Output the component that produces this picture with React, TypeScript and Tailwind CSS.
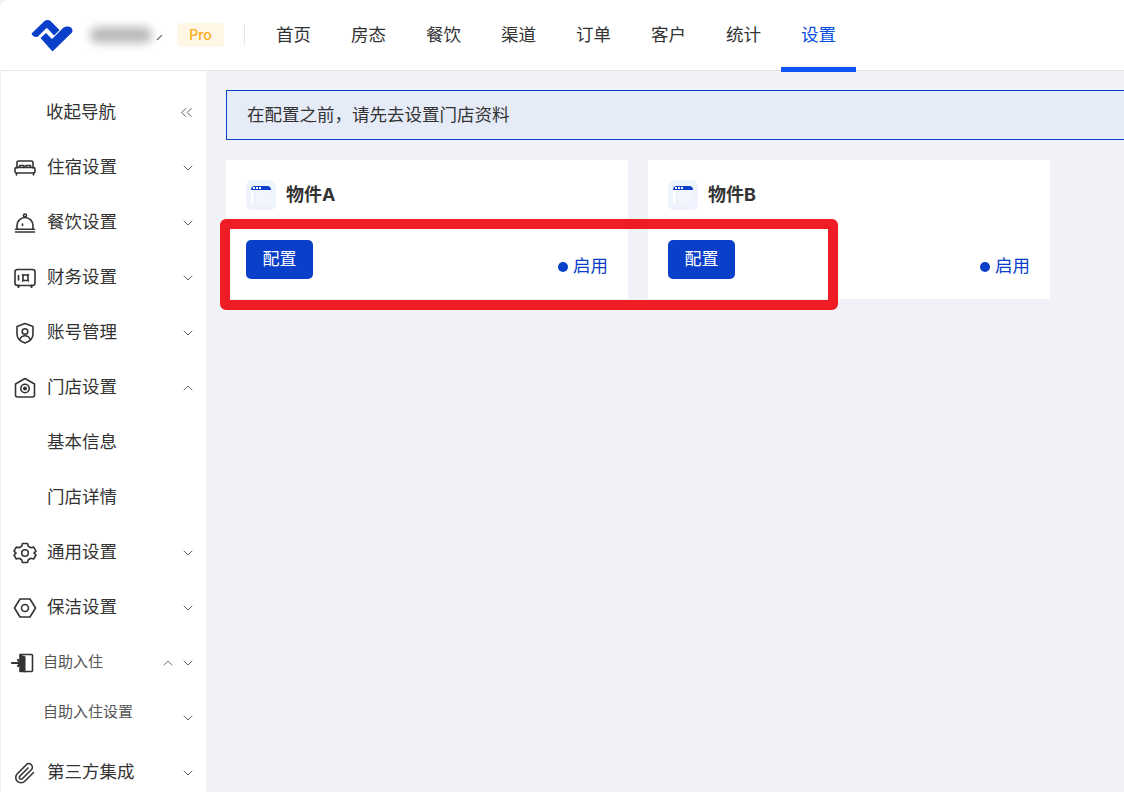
import { ReactNode } from 'react';
import { ChevronDown, ChevronUp, ChevronsLeft } from 'lucide-react';

const tabs = ['首页', '房态', '餐饮', '渠道', '订单', '客户', '统计', '设置'];

const Svg = ({ children }: { children: ReactNode }) => (
	<svg
		viewBox="0 0 24 24"
		className="w-6 h-6 text-[#333]"
		fill="none"
		stroke="currentColor"
		strokeWidth="1.6"
		strokeLinecap="round"
		strokeLinejoin="round"
	>
		{children}
	</svg>
);

const BedIcon = () => (
	<Svg>
		<path d="M4 12V6.5A1.5 1.5 0 0 1 5.5 5h13A1.5 1.5 0 0 1 20 6.5V12" />
		<path d="M6.5 11V9.5h4.5V11M13 11V9.5h4.5V11" />
		<rect x="2" y="11.5" width="20" height="5.5" rx="1.5" />
		<path d="M3.5 17v2M20.5 17v2" />
	</Svg>
);

const BellIcon = () => (
	<Svg>
		<circle cx="12" cy="4.5" r="1.5" />
		<path d="M4 18v-3.5a8 8 0 0 1 16 0V18" />
		<path d="M2.5 18.3h19M2.5 21h19" />
		<path d="M9.5 13v1.5" />
	</Svg>
);

const SafeIcon = () => (
	<Svg>
		<rect x="2" y="3.5" width="20" height="16" rx="2.5" />
		<path d="M5.5 9.5v4.5" />
		<path d="M10 9h5v5.5h-5zM9.5 8.5l1 1M15.500 8.500l-1 1M9.500 15l1-1M15.500 15l-1-1" />
		<path d="M5.500 19.500v1.500M18.500 19.500v1.500" strokeWidth="2.200" />
	</Svg>
);

const ShieldIcon = () => (
	<Svg>
		<path d="M12 2.500l8 3v7.500c0 4.500-3.500 7.500-8 9-4.500-1.500-8-4.500-8-9V5.500z" />
		<circle cx="12" cy="10.500" r="2.800" />
		<path d="M7 18c1-2.500 3-3.300 5-3.300s4 .8 5 3.300" />
	</Svg>
);

const HomeIcon = () => (
	<Svg>
		<path d="M12 2.500l9.500 5.500v11a2 2 0 0 1-2 2h-15a2 2 0 0 1-2-2V8z" />
		<circle cx="12" cy="12.500" r="4.200" />
		<circle cx="12" cy="12.500" r="1.200" fill="currentColor" />
	</Svg>
);

const GearIcon = () => (
	<Svg>
		<path d="M9.500 2.500h5l.8 2.800 2.600 1.500 2.800-.7 2.300 4-2 2 0 .0 2 1.900-2.300 4-2.800-.7-2.600 1.500-.8 2.700h-5l-.8-2.700-2.600-1.500-2.800.7-2.300-4 2-1.900-2-2 2.300-4 2.800.7 2.600-1.500z" />
		<circle cx="12" cy="12" r="3.300" />
	</Svg>
);

const HexIcon = () => (
	<Svg>
		<path d="M7 3h10l5.500 9-5.500 9H7l-5.500-9z" />
		<circle cx="12" cy="12" r="3.500" />
	</Svg>
);

const DoorIcon = () => (
	<Svg>
		<path d="M9 3.500h11.500a1 1 0 0 1 1 1v15a1 1 0 0 1-1 1H9z" />
		<path d="M9 3.500l5.500 2v16l-5.500-1.500z" fill="currentColor" stroke="none" />
		<path d="M1 12h9M7 9l3 3-3 3" strokeWidth="2.200" />
	</Svg>
);

const ClipIcon = () => (
	<Svg>
		<path d="M20.500 11.500l-8.700 8.700a5.300 5.300 0 0 1-7.500-7.500l9-9a3.500 3.500 0 0 1 5 5l-9 9a1.700 1.700 0 0 1-2.500-2.500l8.200-8.200" />
	</Svg>
);

const Logo = () => (
	<svg viewBox="0 0 44 34" className="w-[44px] h-[34px]">
		<path
			d="M1.500 15.500 14 3.500a5 5 0 0 1 7 0l8.500 8.500L24 17.500l-6-6.500-1.500-1L8 18.500a4.500 4.500 0 0 1-6.500-3z"
			fill="#0a3fc9"
		/>
		<path
			d="M10.500 20 16 15l6 6 11-11c1.500-1.500 3-1.500 5-1.500 3.500 0 5.500 3.500 4 6L22.500 33.500z"
			fill="#0a3fc9"
		/>
	</svg>
);

const WindowIcon = () => (
	<div className="w-[30px] h-[30px] rounded-md bg-[#eff3fd] flex items-center justify-center">
		<div className="w-5 h-[18px] rounded-sm bg-white overflow-hidden flex flex-col">
			<div className="h-1 bg-[#0a3fc9] flex items-center gap-px pl-0.5">
				<span className="w-0.5 h-0.5 bg-white" />
				<span className="w-0.5 h-0.5 bg-white" />
				<span className="w-0.5 h-0.5 bg-white" />
			</div>
			<div className="flex-1 flex">
				<div className="w-1 border-r border-[#e4e9f8]" />
				<div className="flex-1 bg-[#f3f5fc]" />
			</div>
		</div>
	</div>
);

interface RowProps {
	icon?: ReactNode;
	label: string;
	open?: boolean;
}

function MenuRow({ icon, label, open }: RowProps) {
	return (
		<div className="h-[55px] flex items-center relative">
			<div className="w-[46px] pl-3 shrink-0">{icon}</div>
			<span className="text-[17.5px] text-[#333]">{label}</span>
			{open === undefined ? null : open ? (
				<ChevronUp className="absolute left-[179px] w-4 h-4 text-[#666]" strokeWidth={1.5} />
			) : (
				<ChevronDown className="absolute left-[179px] w-4 h-4 text-[#666]" strokeWidth={1.5} />
			)}
		</div>
	);
}

function PropertyCard({ name }: { name: string }) {
	return (
		<div className="w-[402px] h-[139px] bg-white px-5 pt-5">
			<div className="flex items-center gap-2.5 h-[30px]">
				<WindowIcon />
				<span className="text-lg font-bold text-[#333]">{name}</span>
			</div>
			<div className="flex justify-between mt-[30px]">
				<button className="w-[67px] h-[39px] rounded-[5px] bg-[#0a3fc9] text-white text-[17px]">
					配置
				</button>
				<div className="flex items-center gap-[5px] h-[17px] mt-[18px] text-[#0a3fc9] text-[17.5px]">
					<span className="w-2.5 h-2.5 rounded-full bg-[#0a3fc9]" />
					启用
				</div>
			</div>
		</div>
	);
}

export default function App() {
	return (
		<div className="w-[1124px] h-[792px] overflow-hidden relative flex flex-col bg-[#f0f2f7] font-['Inter','Noto_Sans_CJK_SC',sans-serif]">
			<header className="h-[71px] shrink-0 bg-white border-b border-[#e6e6e8] flex items-center pl-[30px] rounded-tl-lg">
				<Logo />
				<div className="w-[62px] h-4 ml-[16px] rounded-full bg-[#b9b9b9] blur-[5px]" />
				<span className="ml-[4px] mt-1 w-[7px] border-t border-[#555] -rotate-45" />
				<span className="ml-[14px] w-[47px] h-6 rounded-sm bg-[#fff6e6] text-[#fbac14] text-sm font-medium flex items-center justify-center">
					Pro
				</span>
				<span className="ml-5 w-px h-[22px] bg-[#e8e8e8]" />
				<nav className="flex ml-[11px] h-full">
					{tabs.map((t) => (
						<div
							key={t}
							className={`relative w-[75px] flex items-center justify-center text-[17.5px] ${
								t === '设置' ? 'text-[#0a4fe0]' : 'text-[#333]'
							}`}
						>
							{t}
							{t === '设置' && (
								<span className="absolute left-0 right-0 bottom-[-2px] h-[5px] bg-[#0d55f5]" />
							)}
						</div>
					))}
				</nav>
			</header>
			<div className="flex flex-1 min-h-0">
				<aside className="w-[205px] shrink-0 ml-px bg-white pt-[14px] overflow-hidden">
					<div className="h-[55px] flex items-center relative">
						<span className="pl-[45px] text-[17.5px] text-[#333]">收起导航</span>
						<ChevronsLeft className="absolute left-[176px] w-[19px] h-[19px] text-[#555]" strokeWidth={1.2} />
					</div>
					<MenuRow icon={<BedIcon />} label="住宿设置" open={false} />
					<MenuRow icon={<BellIcon />} label="餐饮设置" open={false} />
					<MenuRow icon={<SafeIcon />} label="财务设置" open={false} />
					<MenuRow icon={<ShieldIcon />} label="账号管理" open={false} />
					<MenuRow icon={<HomeIcon />} label="门店设置" open={true} />
					<MenuRow label="基本信息" />
					<MenuRow label="门店详情" />
					<MenuRow icon={<GearIcon />} label="通用设置" open={false} />
					<MenuRow icon={<HexIcon />} label="保洁设置" open={false} />
					<div className="h-[55px] flex items-center relative">
						<div className="w-[42px] pl-[10px] shrink-0">
							<DoorIcon />
						</div>
						<span className="text-[15px] text-[#555]">自助入住</span>
						<ChevronUp className="absolute left-[159px] w-4 h-4 text-[#777]" strokeWidth={1.5} />
						<ChevronDown className="absolute left-[179px] w-4 h-4 text-[#666]" strokeWidth={1.5} />
					</div>
					<div className="h-[55px] flex items-center relative">
						<span className="pl-[42px] -mt-[11px] text-[15px] text-[#555]">自助入住设置</span>
						<ChevronDown className="absolute left-[179px] w-4 h-4 text-[#666]" strokeWidth={1.5} />
					</div>
					<MenuRow icon={<ClipIcon />} label="第三方集成" open={false} />
				</aside>
				<main className="flex-1 min-w-0 px-5 pt-[19px] overflow-hidden">
					<div className="w-[920px] h-[50px] border border-[#0a3fc9] bg-[#e6ebf8] flex items-center pl-5 text-[17.5px] text-[#333]">
						在配置之前，请先去设置门店资料
					</div>
					<div className="flex gap-5 mt-5">
						<PropertyCard name="物件A" />
						<PropertyCard name="物件B" />
					</div>
				</main>
			</div>
			<div className="absolute left-[220px] top-[219px] w-[618px] h-[91px] border-[10px] border-[#ee1c25] rounded-md" />
		</div>
	);
}
